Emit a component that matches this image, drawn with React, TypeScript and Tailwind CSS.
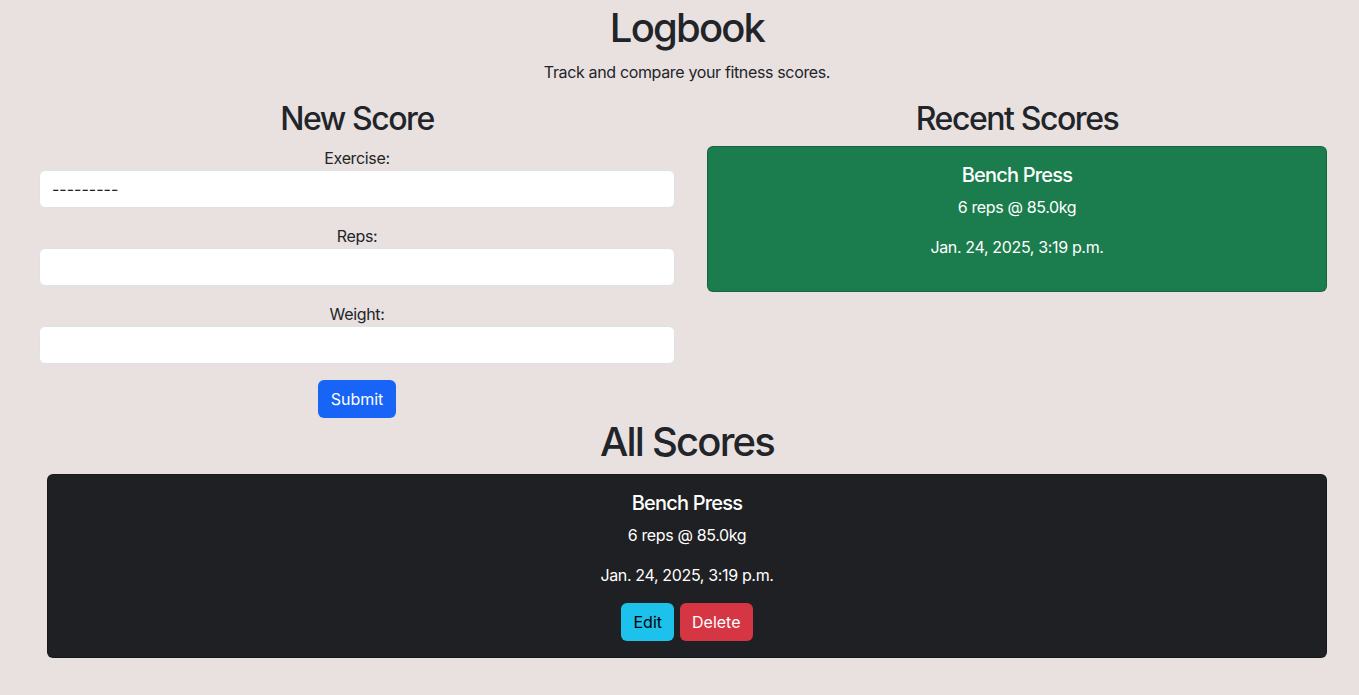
import React from 'react';

const font = { fontFamily: 'Inter, "Noto Sans", sans-serif' };

const score = {
    exercise: 'Bench Press',
    reps: 6,
    weight: '85.0',
    date: 'Jan. 24, 2025, 3:19 p.m.',
};

const Field: React.FC<{ label: string; children: React.ReactNode }> = ({ label, children }) => (
    <div className="mb-4 flex flex-col items-center">
        <label className="text-[16px] leading-6">{label}</label>
        {children}
    </div>
);

const inputCls =
    'w-full h-[38px] bg-white border border-[#dee2e6] rounded-[6px] px-3 text-[16px] text-[#212529] tracking-normal outline-none';

const btnCls = 'h-[38px] px-3 rounded-[6px] text-[16px] tracking-normal';

const ScoreCard: React.FC<{ tone: string; actions?: boolean }> = ({ tone, actions }) => (
    <div className={`${tone} rounded-[6px] border border-black/20 text-white text-center p-4`}>
        <h5 className="text-[20px] leading-6 font-medium tracking-[-0.04em] mb-2">{score.exercise}</h5>
        <p className="text-[16px] leading-6 mb-4">
            {score.reps} reps @ {score.weight}kg
        </p>
        <p className="text-[16px] leading-6 mb-4">{score.date}</p>
        {actions && (
            <div className="flex justify-center gap-[6px]">
                <button className={`${btnCls} bg-[#1cc1ec] text-black`}>Edit</button>
                <button className={`${btnCls} bg-[#d63543] text-white`}>Delete</button>
            </div>
        )}
    </div>
);

export default function App() {
    return (
        <div
            className="min-h-screen bg-[#e9e1e0] text-[#212529] tracking-[-0.022em] pt-1 pl-[47px] pr-[32px]"
            style={font}
        >
            <h1 className="text-[40px] leading-[48px] font-medium tracking-[-0.045em] text-center mb-2">Logbook</h1>
            <p className="text-[16px] leading-6 text-center mb-4">Track and compare your fitness scores.</p>

            <div className="flex gap-8 -ml-[8px]">
                <div className="w-[636px]">
                    <h2 className="text-[32px] leading-[38px] font-medium tracking-[-0.045em] text-center mb-2">
                        New Score
                    </h2>
                    <form className="flex flex-col items-center">
                        <div className="w-full">
                            <Field label="Exercise:">
                                <select className={`${inputCls} appearance-none`} defaultValue="">
                                    <option value="">---------</option>
                                    <option value="bench">Bench Press</option>
                                </select>
                            </Field>
                            <Field label="Reps:">
                                <input type="number" className={inputCls} />
                            </Field>
                            <Field label="Weight:">
                                <input type="number" className={inputCls} />
                            </Field>
                        </div>
                        <button type="button" className={`${btnCls} px-[13px] bg-[#1764f6] text-white`}>
                            Submit
                        </button>
                    </form>
                </div>
                <div className="flex-1">
                    <h2 className="text-[32px] leading-[38px] font-medium tracking-[-0.045em] text-center mb-2">
                        Recent Scores
                    </h2>
                    <ScoreCard tone="bg-[#1b7d4d]" />
                </div>
            </div>

            <h1 className="text-[40px] leading-[48px] font-medium tracking-[-0.045em] text-center mb-2">All Scores</h1>
            <ScoreCard tone="bg-[#1f2023]" actions />
        </div>
    );
}
